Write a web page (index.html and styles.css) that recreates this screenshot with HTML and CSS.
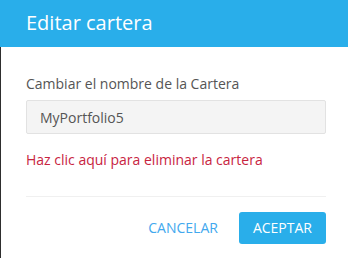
FILE: index.html
```html
<!DOCTYPE html>
<html lang="es">
<head>
<meta charset="utf-8">
<title>Editar cartera</title>
<link rel="stylesheet" href="styles.css">
</head>
<body>
<div class="dialog">
  <header class="dialog-header">
    <h1 class="dialog-title">Editar cartera</h1>
  </header>
  <div class="dialog-body">
    <label class="field-label" for="name">Cambiar el nombre de la Cartera</label>
    <input class="field-input" id="name" type="text" value="MyPortfolio5">
    <a class="delete-link" href="#">Haz clic aquí para eliminar la cartera</a>
    <div class="divider"></div>
    <div class="dialog-footer">
      <button class="btn btn-flat" type="button">CANCELAR</button>
      <button class="btn btn-primary" type="button">ACEPTAR</button>
    </div>
  </div>
</div>
</body>
</html>
```
FILE: styles.css
```css
html, body {
  margin: 0;
  padding: 0;
  background: #ffffff;
}
body {
  font-family: "Open Sans", "Liberation Sans", sans-serif;
  width: 348px;
  height: 258px;
  overflow: hidden;
}
.dialog {
  width: 348px;
  height: 258px;
  display: flex;
  flex-direction: column;
  box-sizing: border-box;
  border-left: 1px solid #2e2e2e;
}
.dialog-header {
  height: 47px;
  background: #29aeea;
  display: flex;
  align-items: center;
  padding-left: 26px;
  margin-left: -1px;
  flex-shrink: 0;
}
.dialog-title {
  margin: 0;
  font-weight: 400;
  font-size: 20px;
  color: #ffffff;
  line-height: 28px;
  padding-bottom: 2px;
}
.dialog-body {
  padding: 27px 22px 0 25px;
  display: flex;
  flex-direction: column;
}
.field-label {
  font-size: 14px;
  line-height: 20px;
  color: #555555;
}
.field-input {
  margin-top: 6px;
  height: 34px;
  box-sizing: border-box;
  border: 1px solid #e2e2e2;
  border-radius: 2px;
  background: #f4f4f4;
  padding: 0 13px;
  font-family: inherit;
  font-size: 14px;
  color: #555555;
  outline: none;
  width: 100%;
}
.delete-link {
  margin-top: 16px;
  font-size: 14px;
  line-height: 20px;
  color: #c8243f;
  text-decoration: none;
}
.divider {
  margin-top: 26px;
  height: 1px;
  background: #f0f0f0;
}
.dialog-footer {
  margin-top: 15px;
  display: flex;
  justify-content: flex-end;
  gap: 7px;
}
.btn {
  height: 32px;
  padding: 0 14px;
  border: none;
  border-radius: 3px;
  font-family: inherit;
  font-size: 14px;
  line-height: 32px;
  cursor: pointer;
}
.btn-flat {
  background: transparent;
  color: #42a8ee;
}
.btn-primary {
  background: #29aeea;
  color: #ffffff;
}
```
